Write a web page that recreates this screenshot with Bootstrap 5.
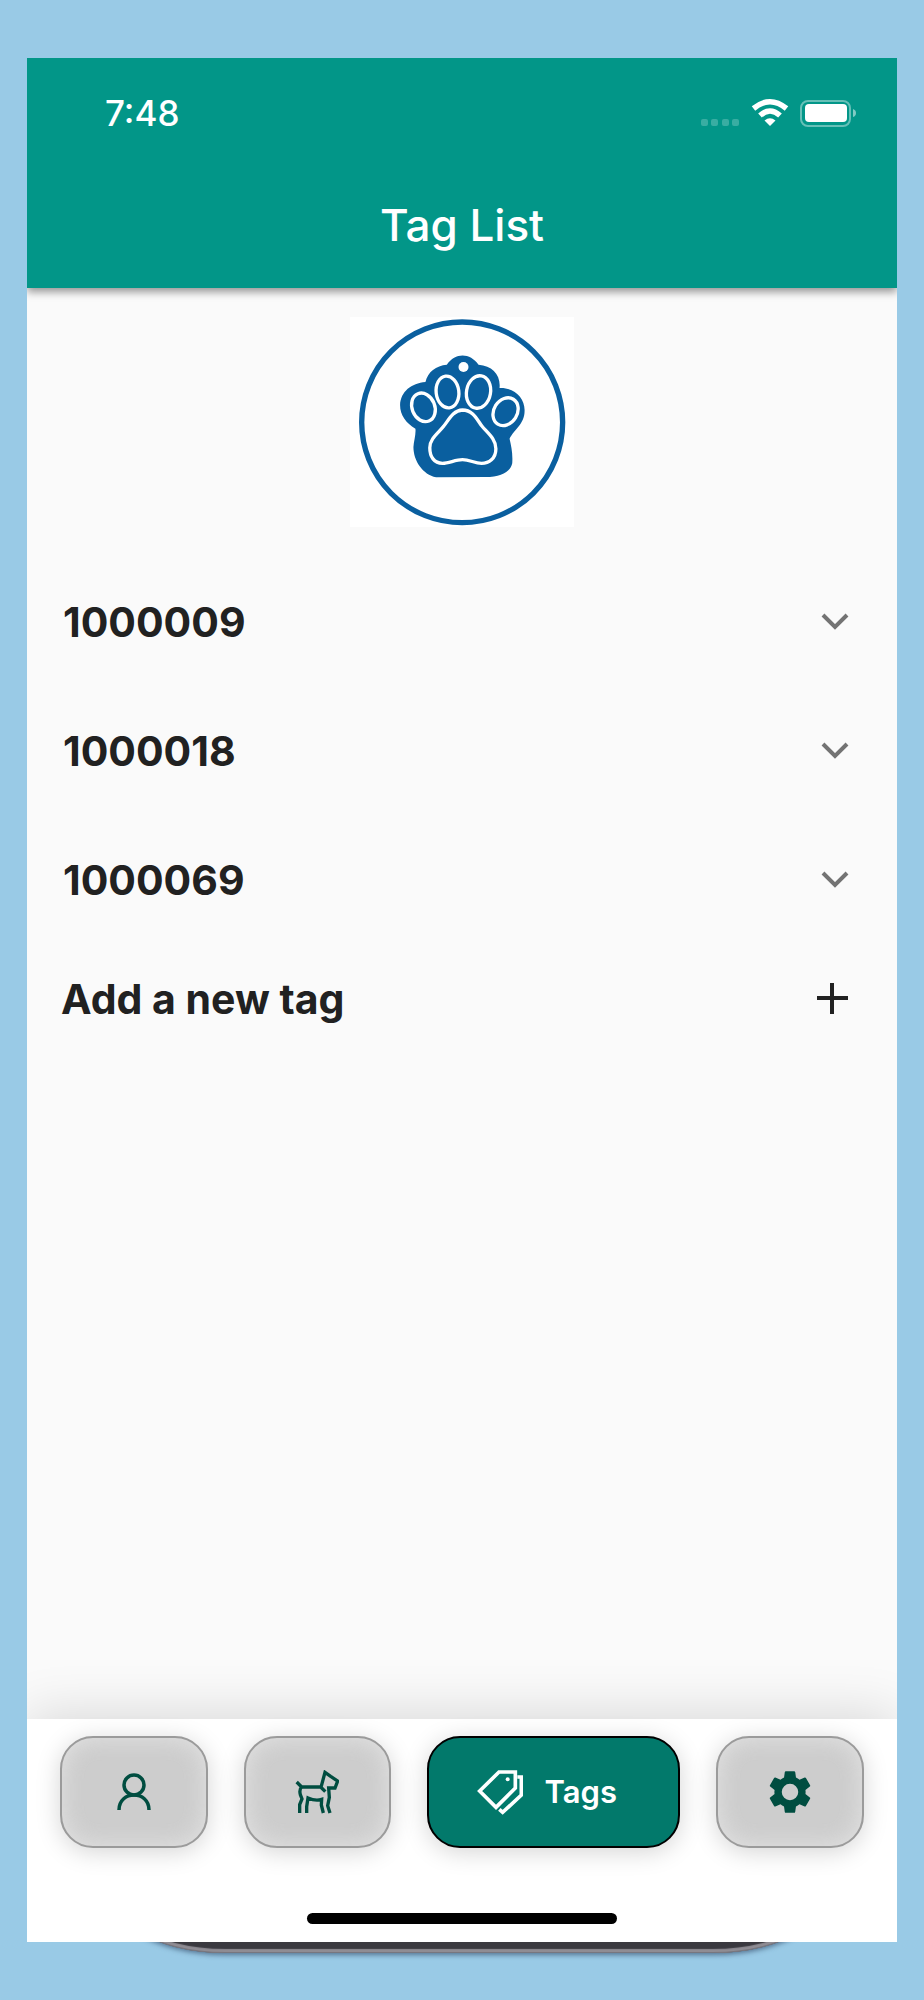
<!DOCTYPE html>
<html lang="en">
<head>
<meta charset="utf-8">
<meta name="viewport" content="width=device-width, initial-scale=1">
<title>Tag List</title>
<link href="https://cdn.jsdelivr.net/npm/bootstrap@5.3.0/dist/css/bootstrap.min.css" rel="stylesheet">
<style>
  body { background: #99cae6; font-family: Inter, "Liberation Sans", sans-serif; padding: 58px 27px 47px; color: #212121; }
  .phone-screen { background: #fafafa; z-index: 1; }
  .app-header { background: #029688; height: 230px; box-shadow: 0 4px 8px rgba(0,0,0,.4); clip-path: inset(0 0 -20px 0); }
  .status-bar { height: 111px; padding: 0 40px 1px 78px; font-size: 35px; font-weight: 500; }
  .app-title { font-size: 44px; line-height: 112px; font-weight: 500; }
  .brand-logo { margin: 29px 0 30px; }
  .tag-row { height: 129px; padding: 0 48px 0 36px; font-size: 41px; line-height: 48px; font-weight: 700; color: #212121; background: none; border: 0; }
  .tag-row.add-row { height: 110px; padding-left: 34px; }
  .bottom-nav { background: #fff; padding: 17px 33px 18px; box-shadow: 0 -4px 50px rgba(0,0,0,.14); clip-path: inset(-90px 0 0 0); }
  .nav-items { gap: 36px; }
  .nav-tile { flex: 147 1 0; height: 112px; border: 2px solid #9b9b9b; border-radius: 33px; color: #004d40; background: #cdcdcd; box-shadow: 0 4px 24px rgba(0,0,0,.17), inset 0 0 24px rgba(240,240,240,.65); }
  .nav-tile.current { flex-grow: 255; border-color: #000; background: #02796b; color: #fff; gap: 22px; font-size: 31px; font-weight: 600; box-shadow: 0 4px 24px rgba(0,0,0,.17); }
  .nav-tile.current span { margin-right: 14px; }
  .home-bar { width: 310px; height: 11px; margin-top: 65px; background: #000; }
  /* The handset's lower rim, tucked under the screen */
  .phone-edge { height: 120px; margin: -109px 54px 0 68px; background: #3a393f; border-radius: 0 0 130px 130px / 0 0 80px 80px; box-shadow: 0 2px 5px rgba(40,60,90,.6), inset 0 -1px 0 #77767e, inset 0 -4px 1px #8f8c93; }
</style>
</head>
<body class="min-vh-100 d-flex flex-column">
<div class="phone-screen flex-grow-1 d-flex flex-column position-relative">
  <header class="app-header text-white">
    <div class="status-bar d-flex align-items-center">
      <time class="me-auto">7:48</time>
      <svg width="156" height="30" viewBox="0 0 156 30" aria-hidden="true">
        <g fill="#fff" fill-opacity=".22"><rect x="0" y="21" width="7" height="7" rx="2"/><rect x="10" y="21" width="7" height="7" rx="2"/><rect x="21" y="21" width="7" height="7" rx="2"/><rect x="31" y="21" width="7" height="7" rx="2"/></g>
        <g fill="none" stroke="#fff" stroke-width="5.500"><path d="M52.500 10.500Q69 -3 85.500 10.500"/><path d="M59 17.500Q69 8.500 79 17.500"/></g>
        <path d="M63.500 22.500Q69 18 74.500 22.500L69 28Z" fill="#fff"/>
        <rect x="100" y="3" width="49" height="25" rx="7" fill="none" stroke="#fff" stroke-opacity=".4" stroke-width="2"/>
        <rect x="104" y="6" width="42" height="18" rx="4" fill="#fff"/>
        <path d="M152 11q3 1 3 4t-3 4Z" fill="#fff" fill-opacity=".5"/>
      </svg>
    </div>
    <h1 class="app-title text-center m-0">Tag List</h1>
  </header>

  <main class="flex-grow-1">
    <div class="brand-logo d-flex justify-content-center">
      <svg width="224" height="210" viewBox="60 51 671 630" preserveAspectRatio="none" role="img" aria-label="Paw tag logo">
        <path d="M60 51h671v630H60z" fill="#fff"/>
        <circle cx="396" cy="367" r="301" fill="none" stroke="#0a5f9f" stroke-width="16"/>
        <path fill="#0a5f9f" d="M350 194C376 156 420 158 445 194C486 197 512 224 508 264C551 262 584 292 583 332C583 372 552 388 538 416C543 438 548 460 546 490C541 515 513 530 466 531L318 532C278 524 250 482 250 441C251 424 258 402 256 386C228 370 210 345 210 315C212 274 244 250 286 246C293 215 318 197 350 194Z"/>
        <circle cx="400" cy="201" r="15" fill="#fff"/>
        <g fill="none" stroke="#fff" stroke-width="10">
          <ellipse cx="280" cy="322" rx="34" ry="44" transform="rotate(-22 280 322)"/>
          <ellipse cx="352" cy="276" rx="34" ry="48" transform="rotate(-7 352 276)"/>
          <ellipse cx="445" cy="276" rx="36" ry="49" transform="rotate(10 445 276)"/>
          <ellipse cx="526" cy="335" rx="35" ry="44" transform="rotate(32 526 335)"/>
          <path d="M397 330C430 330 442 362 455 378C470 397 497 416 497 446C497 476 476 490 454 490C433 490 419 479 397 479C375 479 357 490 337 490C312 490 299 470 299 443C299 415 326 398 341 378C355 361 368 331 397 330Z"/>
        </g>
      </svg>
    </div>
    <div>
      <button type="button" class="tag-row w-100 d-flex align-items-center justify-content-between"><span>1000009</span><svg width="28" height="18" viewBox="0 0 28 18" fill="none" stroke="#737373" stroke-width="4" aria-hidden="true"><path d="M2 2l12 12L26 2"/></svg></button>
      <button type="button" class="tag-row w-100 d-flex align-items-center justify-content-between"><span>1000018</span><svg width="28" height="18" viewBox="0 0 28 18" fill="none" stroke="#737373" stroke-width="4" aria-hidden="true"><path d="M2 2l12 12L26 2"/></svg></button>
      <button type="button" class="tag-row w-100 d-flex align-items-center justify-content-between"><span>1000069</span><svg width="28" height="18" viewBox="0 0 28 18" fill="none" stroke="#737373" stroke-width="4" aria-hidden="true"><path d="M2 2l12 12L26 2"/></svg></button>
      <button type="button" class="tag-row add-row w-100 d-flex align-items-center justify-content-between"><span>Add a new tag</span><svg width="32" height="32" viewBox="0 0 32 32" fill="none" stroke="#212121" stroke-width="4" aria-hidden="true"><path d="M0 15h31M15 0v31"/></svg></button>
    </div>
  </main>

  <nav class="bottom-nav" aria-label="Main">
    <div class="nav-items d-flex">
      <button type="button" class="nav-tile d-flex align-items-center justify-content-center p-0" aria-label="Profile">
        <svg width="36" height="40" viewBox="0 0 36 40" fill="none" stroke="currentColor" stroke-width="3.500"><circle cx="18" cy="13" r="10"/><path d="M3 38C3 18 33 18 33 38"/></svg>
      </button>
      <button type="button" class="nav-tile d-flex align-items-center justify-content-center p-0" aria-label="Pets">
        <svg width="44" height="44" viewBox="0 0 132 132" fill="none" stroke="currentColor" stroke-width="10"><path d="M5 36L20 51H77L91 65M20 51Q12 58 16 74L21 87L14 104V129M35 129V110L39 84Q62 94 80 88L79 105L85 129M105 129L98 107L103 82L101 54H120L128 33L107 19L90 7L78 52"/></svg>
      </button>
      <button type="button" class="nav-tile current d-flex align-items-center justify-content-center p-0" aria-current="page">
        <svg width="46" height="46" viewBox="0 0 138 138" fill="none" stroke="currentColor" stroke-width="11"><path d="M8 66L66 9H115V57L57 115Z"/><path d="M121 24H133V78L77 130L67 121"/><circle cx="92" cy="31" r="6" fill="currentColor" stroke="none"/></svg>
        <span>Tags</span>
      </button>
      <button type="button" class="nav-tile d-flex align-items-center justify-content-center p-0" aria-label="Settings">
        <svg width="52" height="52" viewBox="0 0 24 24" fill="currentColor"><path d="M19.140 12.940c.04-.3.060-.61.060-.94 0-.32-.02-.64-.07-.94l2.030-1.580c.18-.14.230-.41.120-.61l-1.920-3.320c-.12-.22-.37-.29-.59-.22l-2.390.96c-.5-.38-1.030-.7-1.620-.94l-.36-2.540c-.04-.24-.24-.41-.48-.41h-3.840c-.24 0-.43.170-.47.410l-.36 2.540c-.59.240-1.130.570-1.620.940l-2.390-.96c-.22-.08-.47 0-.59.220L2.740 8.870c-.12.210-.08.470.120.610l2.030 1.580c-.05.300-.09.630-.09.940s.02.640.07.940l-2.030 1.580c-.18.140-.23.410-.12.610l1.920 3.320c.12.220.370.290.590.220l2.390-.96c.5.380 1.030.700 1.620.940l.36 2.540c.05.240.240.410.480.410h3.840c.24 0 .44-.17.470-.41l.36-2.540c.59-.24 1.130-.56 1.620-.94l2.390.96c.22.080.470 0 .59-.22l1.920-3.320c.12-.22.070-.47-.12-.61zM12 15.800a3.800 3.800 0 1 1 0-7.600 3.800 3.800 0 0 1 0 7.600z"/></svg>
      </button>
    </div>
    <div class="home-bar rounded-pill mx-auto"></div>
  </nav>
</div>
<div class="phone-edge" aria-hidden="true"></div>
<script src="https://cdn.jsdelivr.net/npm/bootstrap@5.3.0/dist/js/bootstrap.bundle.min.js"></script>
</body>
</html>
